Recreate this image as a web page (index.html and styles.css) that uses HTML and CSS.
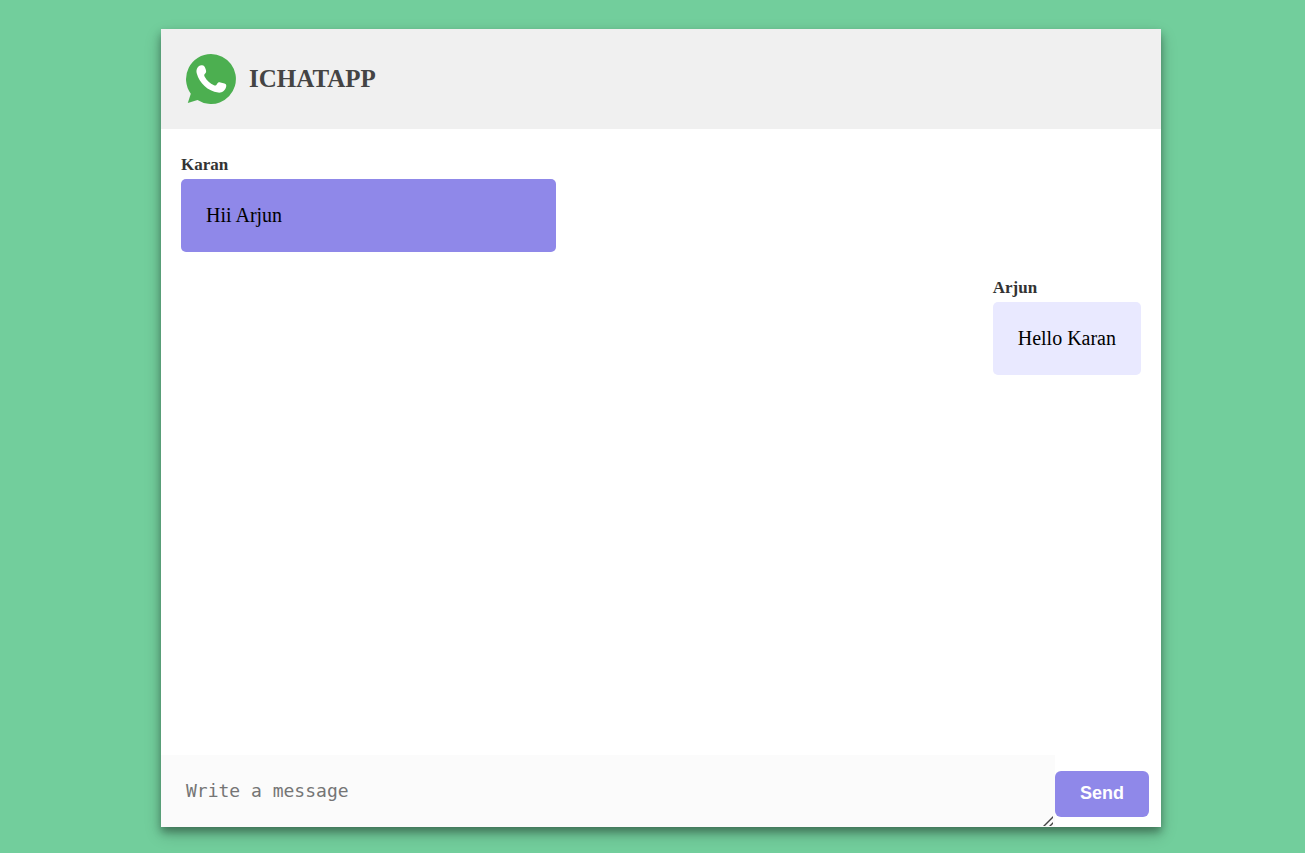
FILE: index.html
```html
<!DOCTYPE html>
<html lang="en">
<head>
<meta charset="utf-8">
<meta name="viewport" content="width=device-width, initial-scale=1">
<title>IChatApp</title>
<link rel="stylesheet" href="styles.css">
</head>
<body>
<main class="chat">
  <header class="brand">
    <svg class="brand-logo" viewBox="0 0 50 50" aria-hidden="true">
      <path fill="#4caf50" d="M25 0a25 25 0 1 1-13.500 46.100L1.800 48.900 4.800 39.700A25 25 0 0 1 25 0z"/>
      <path fill="#fff" d="M15.500 11.200C17.900 10.900 18.800 12.600 19.400 14.400C20.300 16.800 20.600 18 19.200 19.500C18 20.700 18 21.500 18.700 22.700C20.800 26.400 24 29.400 28 31.300C29.300 31.900 30.100 31.400 31 30C31.900 28.300 32.900 28.100 34.500 28.500L38.500 29.400C40 29.800 40.500 30.800 40.200 32.400C39.500 36.400 36 39 32.200 38.600C21.800 37.300 13.300 28.800 10.800 19.500C9.700 15.300 11.700 11.500 15.500 11.200Z"/>
    </svg>
    <h1 class="brand-name">ICHATAPP</h1>
  </header>
  <section class="messages" aria-label="Messages">
    <article class="message incoming">
      <h2 class="sender">Karan</h2>
      <p class="bubble">Hii Arjun</p>
    </article>
    <article class="message outgoing">
      <h2 class="sender">Arjun</h2>
      <p class="bubble">Hello Karan</p>
    </article>
  </section>
  <form class="composer">
    <textarea class="composer-text" rows="1" placeholder="Write a message" aria-label="Write a message"></textarea>
    <button class="send" type="button">Send</button>
  </form>
</main>
</body>
</html>
```
FILE: styles.css
```css
* {
  box-sizing: border-box;
  margin: 0;
}

body {
  min-height: 100vh;
  padding: 29px 8px 26px 25px;
  display: flex;
  justify-content: center;
  background: #72ce9c;
  font-family: "Liberation Serif", "Times New Roman", serif;
}

.chat {
  width: 100%;
  max-width: 1000px;
  display: flex;
  flex-direction: column;
  background: #fff;
  box-shadow: 0 5px 8px rgba(0, 0, 0, 0.32), 0 7px 16px rgba(0, 0, 0, 0.2);
}

.brand {
  display: flex;
  align-items: center;
  gap: 13px;
  padding: 25px;
  background: #f0f0f0;
}

.brand-logo {
  width: 50px;
  height: 50px;
}

.brand-name {
  font-size: 25px;
  line-height: 30px;
  color: #444;
}

.messages {
  flex: 1;
  display: flex;
  flex-direction: column;
  gap: 25px;
  padding: 25px 20px;
}

.message {
  display: flex;
  flex-direction: column;
  gap: 3px;
}

.incoming {
  align-self: flex-start;
  width: 40%;
  min-width: 120px;
  max-width: 375px;
}

.outgoing {
  align-self: flex-end;
}

.sender {
  font-size: 17px;
  line-height: 22px;
  color: #333;
}

.bubble {
  padding: 25px;
  border-radius: 5px;
  font-size: 20px;
  line-height: 23px;
}

.incoming .bubble {
  background: #8f88e9;
}

.outgoing .bubble {
  background: #e9e9ff;
}

.composer {
  display: flex;
  align-items: flex-end;
  padding-right: 12px;
}

.composer-text {
  flex: 1;
  min-width: 0;
  height: 72px;
  padding: 25px;
  border: 0;
  outline: 0;
  background: #fbfbfb;
  font-family: "DejaVu Sans Mono", monospace;
  font-size: 18px;
  line-height: 22px;
  resize: both;
}

.composer-text::placeholder {
  color: #757575;
}

.composer-text::-webkit-resizer {
  background: linear-gradient(135deg, transparent 49%, #444 51%, #444 59%, transparent 61%, transparent 79%, #444 81%, #444 89%, transparent 91%) 3px 4px / 10px 10px no-repeat;
}

.send {
  margin-bottom: 10px;
  padding: 11px 25px 13px;
  border: 0;
  border-radius: 6px;
  background: #8f88e9;
  color: #fff;
  font-family: "Liberation Sans", Arial, sans-serif;
  font-size: 18px;
  font-weight: bold;
  line-height: 22px;
}
```
